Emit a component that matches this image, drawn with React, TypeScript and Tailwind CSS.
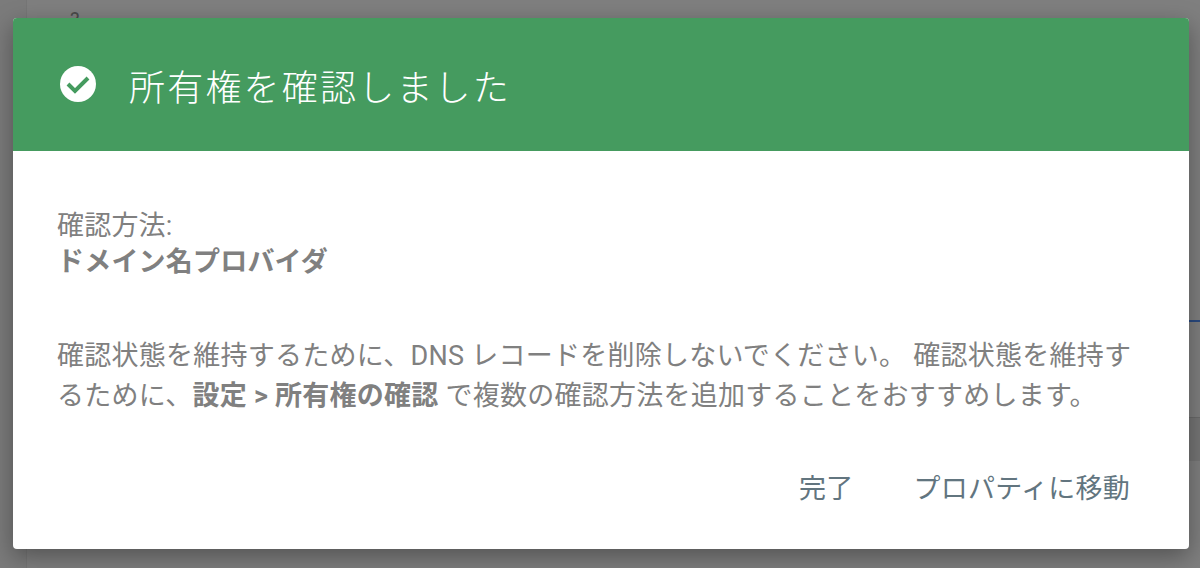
import React from "react";

const font = { fontFamily: '"Roboto", "Noto Sans CJK JP", sans-serif' };

export default function App() {
	return (
		<div
			className="relative h-[568px] w-[1200px] overflow-hidden bg-[#7f7f7f] pl-[13px] pt-[18px]"
			style={font}
		>
			{/* dimmed page behind the dialog */}
			<div className="absolute left-0 top-0 h-full w-[27px] border-r border-[#767676] bg-[#7b7b7b]" />
			<div className="absolute left-[70px] top-[8px] text-[20px] leading-[24px] text-[#4a4a4a]">?</div>
			<div className="absolute left-[1189px] top-[320px] h-[2px] w-[11px] bg-[#2a4a80]" />
			<div className="absolute left-[1189px] top-[417px] h-[44px] w-[11px] border-t border-[#6a6a6a] bg-[#757575]" />

			<div className="relative h-[531px] w-[1176px] overflow-hidden rounded-[4px] bg-white shadow-[0_8px_24px_rgba(0,0,0,0.35)]">
				<div className="flex h-[133px] items-center bg-[#459b5f] pl-[46px] text-white">
					<svg width="38" height="38" viewBox="0 0 38 38" className="mb-[2px]">
						<circle cx="19" cy="19" r="18" fill="#fff" />
						<path d="M9 19l7 7 13-13" fill="none" stroke="#459b5f" strokeWidth="4" />
					</svg>
					<h1 className="ml-[32px] mt-[8px] text-[36px] font-light leading-[44px] tracking-[2.2px]">所有権を確認しました</h1>
				</div>

				<div className="pl-[44px] pr-[45px] pt-[57px] text-[27px] tracking-[0.2px] text-[#808080]">
					<div className="leading-[36px]">確認方法:</div>
					<div className="font-bold leading-[36px]">ドメイン名プロバイダ</div>
					<p className="mt-[56px] w-[1092px] leading-[40px] tracking-[0.25px]">
						確認状態を維持するために、DNS レコードを削除しないでください。 確認状態を維持するために、
						<b>設定 &gt; 所有権の確認</b> で複数の確認方法を追加することをおすすめします。
					</p>
					<div className="mt-[53px] flex justify-end gap-[60px] pr-[14px] tracking-[0.25px] text-[#62757f]">
						<span className="leading-[40px]">完了</span>
						<span className="leading-[40px]">プロパティに移動</span>
					</div>
				</div>
			</div>
		</div>
	);
}
